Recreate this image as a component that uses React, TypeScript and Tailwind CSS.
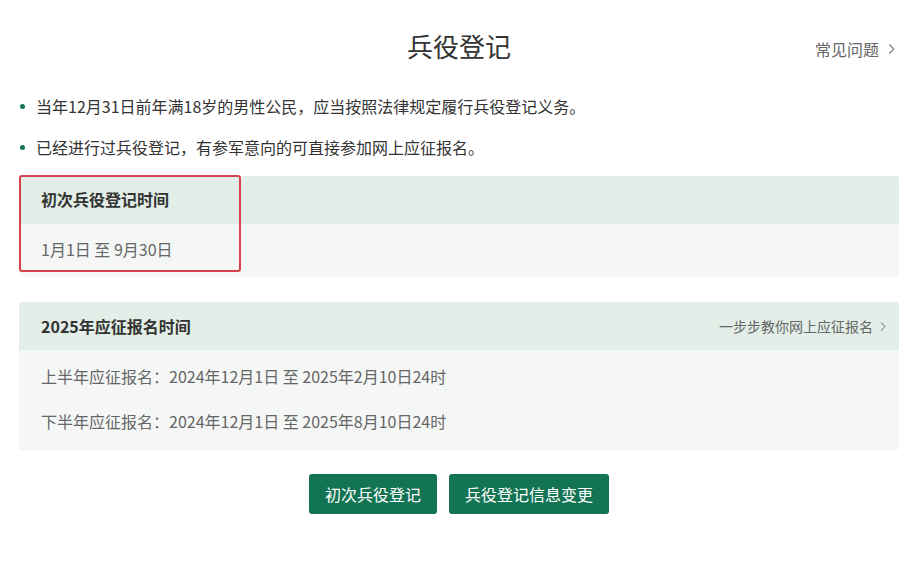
import React from 'react';

const font = { fontFamily: '"Noto Sans CJK SC", "Noto Sans", sans-serif' };

const Chevron = ({ className }: { className?: string }) => (
  <svg viewBox="0 0 8 14" className={className} fill="none" stroke="currentColor" strokeWidth="1.3">
    <path d="M1.5 1.5 L6.5 7 L1.5 12.5" />
  </svg>
);

const App: React.FC = () => (
  <div className="w-[904px] h-[574px] bg-white overflow-hidden" style={font}>
    <div className="ml-[19px] w-[880px]">
      {/* title */}
      <div className="relative h-[94px] flex items-center justify-center pb-[2px]">
        <h1 className="text-[26px] text-[#333] leading-none -mt-[1px]">兵役登记</h1>
        <div className="absolute right-[4px] top-[37px] flex items-center gap-[9px] text-[16px] text-[#666]">
          <span>常见问题</span>
          <Chevron className="w-[7px] h-[12px]" />
        </div>
      </div>

      {/* notes */}
      <ul className="flex flex-col gap-[20px] text-[16px] text-[#333] leading-[21px] mt-[2px]">
        <li className="flex items-center">
          <span className="w-[5px] h-[5px] rounded-full bg-[#137453] ml-[1px] mr-[11px]" />
          当年12月31日前年满18岁的男性公民，应当按照法律规定履行兵役登记义务。
        </li>
        <li className="flex items-center">
          <span className="w-[5px] h-[5px] rounded-full bg-[#137453] ml-[1px] mr-[11px]" />
          已经进行过兵役登记，有参军意向的可直接参加网上应征报名。
        </li>
      </ul>

      {/* card 1 */}
      <div className="relative mt-[18px] rounded-[3px]">
        <div className="h-[48px] bg-[#e2eee7] rounded-t-[3px] flex items-center px-[22px] text-[16px] leading-[21px] font-bold text-[#333] pb-[1px]">
          初次兵役登记时间
        </div>
        <div className="h-[53px] bg-[#f5f7f6] rounded-b-[3px] flex items-center px-[22px] text-[16px] leading-[21px] text-[#666] pb-[2px]">
          1月1日 至 9月30日
        </div>
        <div className="absolute left-0 -top-[1px] w-[222px] h-[97px] border-[2px] border-[#d8434b] rounded-[3px] pointer-events-none" />
      </div>

      {/* card 2 */}
      <div className="mt-[25px] rounded-[3px]">
        <div className="h-[48px] bg-[#e2eee7] rounded-t-[3px] flex items-center justify-between pl-[22px] pr-[13px]">
          <span className="text-[16px] leading-[21px] font-bold text-[#333]">2025年应征报名时间</span>
          <span className="flex items-center gap-[7px] text-[14px] text-[#666]">
            一步步教你网上应征报名
            <Chevron className="w-[6px] h-[11px]" />
          </span>
        </div>
        <div className="h-[100px] bg-[#f5f7f6] rounded-b-[3px] flex flex-col justify-center gap-[24px] px-[22px] text-[16px] text-[#666] leading-[21px] pb-[3px]">
          <div>上半年应征报名：2024年12月1日 至 2025年2月10日24时</div>
          <div>下半年应征报名：2024年12月1日 至 2025年8月10日24时</div>
        </div>
      </div>

      {/* buttons */}
      <div className="mt-[24px] flex justify-center gap-[12px]">
        <button className="h-[40px] w-[128px] rounded-[3px] bg-[#137453] text-white text-[16px]">初次兵役登记</button>
        <button className="h-[40px] w-[160px] rounded-[3px] bg-[#137453] text-white text-[16px]">兵役登记信息变更</button>
      </div>
    </div>
  </div>
);

export default App;
